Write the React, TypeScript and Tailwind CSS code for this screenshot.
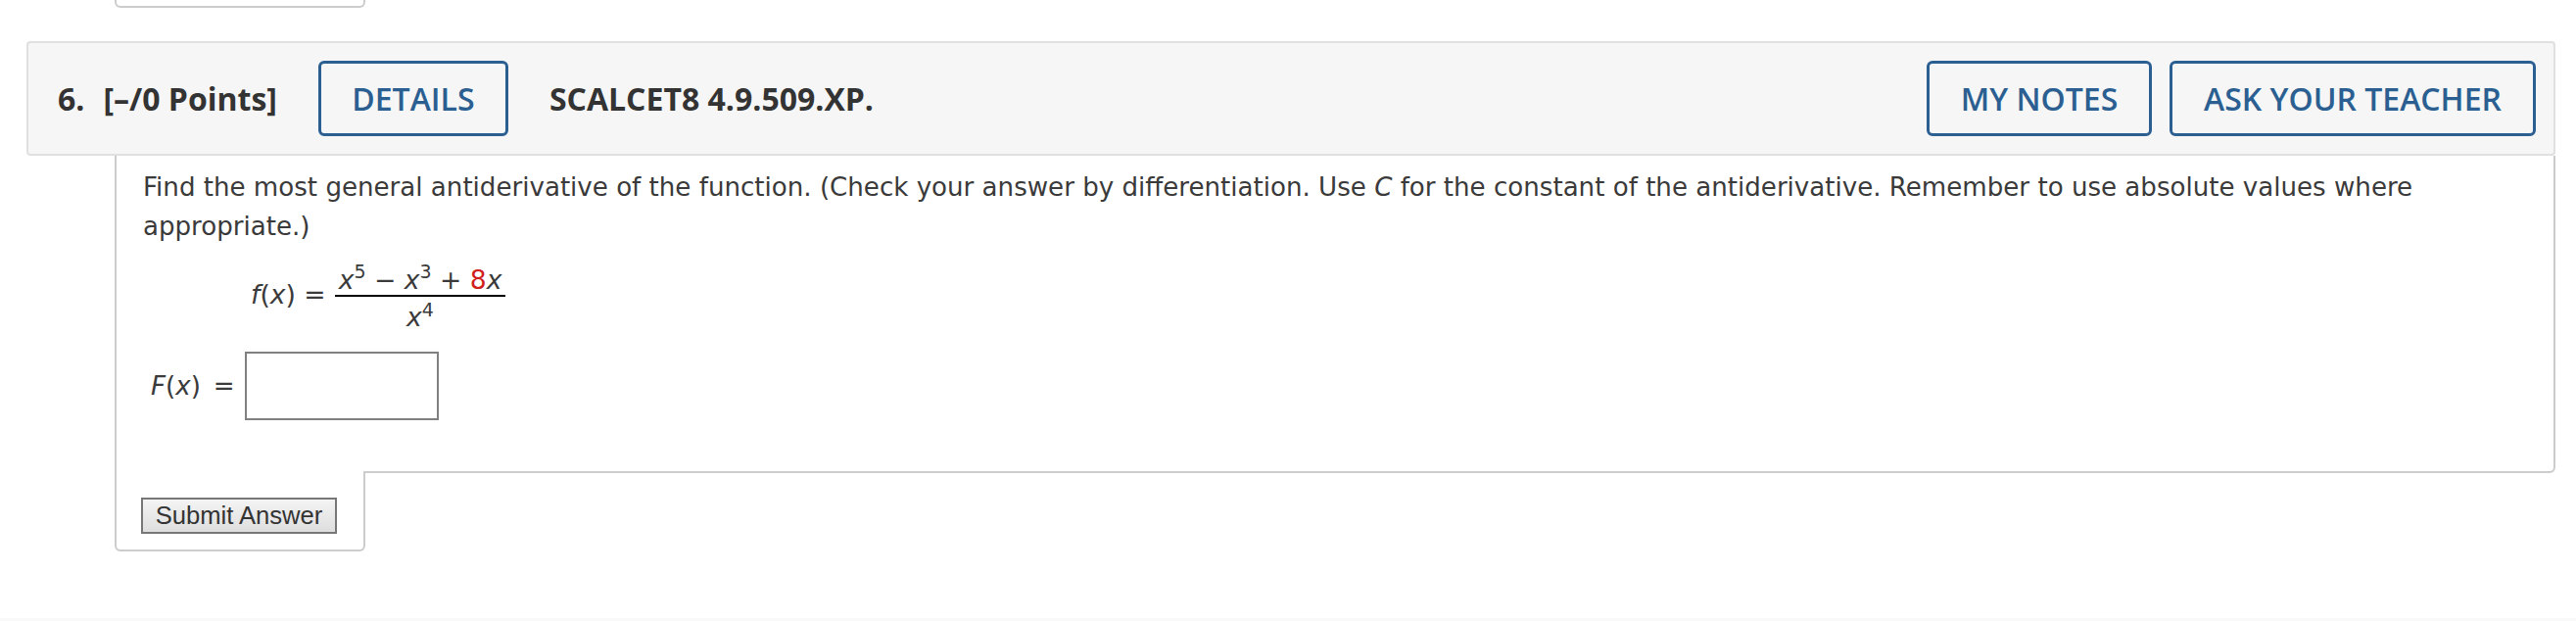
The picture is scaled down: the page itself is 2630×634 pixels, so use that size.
import React from "react";

const headFont = "font-['Open_Sans',_'Liberation_Sans',_sans-serif]";
const bodyFont = "font-['DejaVu_Sans',_Verdana,_sans-serif]";

function OutlineButton({ label, width }: { label: string; width: string }) {
  return (
    <div
      className={`${width} h-[77px] flex items-center justify-center border-[3px] border-[#2b5f91] rounded-[6px] text-[#2b5f91] text-[32px] font-semibold leading-none bg-[#f6f6f6]`}
    >
      {label}
    </div>
  );
}

function Sup({ children, raise }: { children: React.ReactNode; raise: string }) {
  return <span className={`relative ${raise} text-[19px] leading-none not-italic`}>{children}</span>;
}

export default function App() {
  return (
    <div className="w-[2630px] h-[634px] bg-white overflow-hidden flex flex-col">
      {/* tail of the previous question */}
      <div className="ml-[117px] w-[256px] h-[8px] border-x-2 border-b-2 border-[#cccccc] rounded-b-[6px]" />

      {/* question header */}
      <div
        className={`${headFont} mt-[34px] ml-[27px] w-[2582px] h-[117px] border-2 border-[#e0e0e0] rounded-[4px] bg-[#f6f6f6] flex items-center pl-[30px] pr-[18px] text-[#333333]`}
      >
        <span className="text-[32px] font-bold leading-none">6.</span>
        <span className="ml-[19px] text-[32px] font-bold leading-none">[–/0 Points]</span>
        <div className="ml-[42px]">
          <OutlineButton label="DETAILS" width="w-[194px]" />
        </div>
        <span className="ml-[42px] text-[32px] font-bold leading-none">SCALCET8 4.9.509.XP.</span>
        <div className="ml-auto flex gap-[18px]">
          <OutlineButton label="MY NOTES" width="w-[230px]" />
          <OutlineButton label="ASK YOUR TEACHER" width="w-[374px]" />
        </div>
      </div>

      {/* question body */}
      <div className={`${bodyFont} ml-[117px] w-[2492px] text-[#3a3a3a]`}>
        <div className="border-x-2 border-b-2 border-[#cccccc] rounded-br-[6px] pl-[27px] pr-[27px] pt-[12px] pb-[52px]">
          <p className="text-[26.1px] leading-[40px]">
            Find the most general antiderivative of the function. (Check your answer by differentiation. Use{" "}
            <i>C</i> for the constant of the antiderivative. Remember to use absolute values where appropriate.)
          </p>

          <div className="mt-[20px] ml-[110px] flex items-start text-[26.6px]">
            <div className="mt-[15px] leading-[30px] whitespace-pre">
              <i>f</i>(<i>x</i>) =
            </div>
            <div className="ml-[9px] flex flex-col items-stretch">
              <div className="h-[30px] leading-[30px] px-[4px] whitespace-pre text-center">
                <i>x</i>
                <Sup raise="-top-[11px]">5</Sup> − <i>x</i>
                <Sup raise="-top-[11px]">3</Sup> + <span className="text-[#d0201c]">8</span>
                <i>x</i>
              </div>
              <div className="h-[2px] bg-black" />
              <div className="h-[36px] pt-[6px] leading-[30px] text-center">
                <i>x</i>
                <Sup raise="-top-[10px]">4</Sup>
              </div>
            </div>
          </div>

          <div className="mt-[20px] flex items-center text-[26.1px] leading-[40px]">
            <span className="ml-[8px] whitespace-pre">
              <i>F</i>(<i>x</i>)
            </span>
            <span className="ml-[13px]">=</span>
            <input
              type="text"
              aria-label="F(x)"
              className="ml-[10px] w-[198px] h-[70px] border-2 border-[#808080] bg-white outline-none"
            />
          </div>
        </div>

        {/* submit tab */}
        <div className="relative -mt-[2px] w-[256px] h-[82px] bg-white border-x-2 border-b-2 border-[#cccccc] rounded-b-[6px] pl-[25px] pt-[27px]">
          <button
            type="button"
            className="w-[200px] h-[37px] border-2 border-[#777777] bg-gradient-to-b from-[#f4f4f4] to-[#dedede] font-['Liberation_Sans',_Arial,_sans-serif] text-[25.6px] leading-none text-[#333333]"
          >
            Submit Answer
          </button>
        </div>
      </div>

      <div className="mt-auto h-[3px] bg-[#f9f9f9]" />
    </div>
  );
}
